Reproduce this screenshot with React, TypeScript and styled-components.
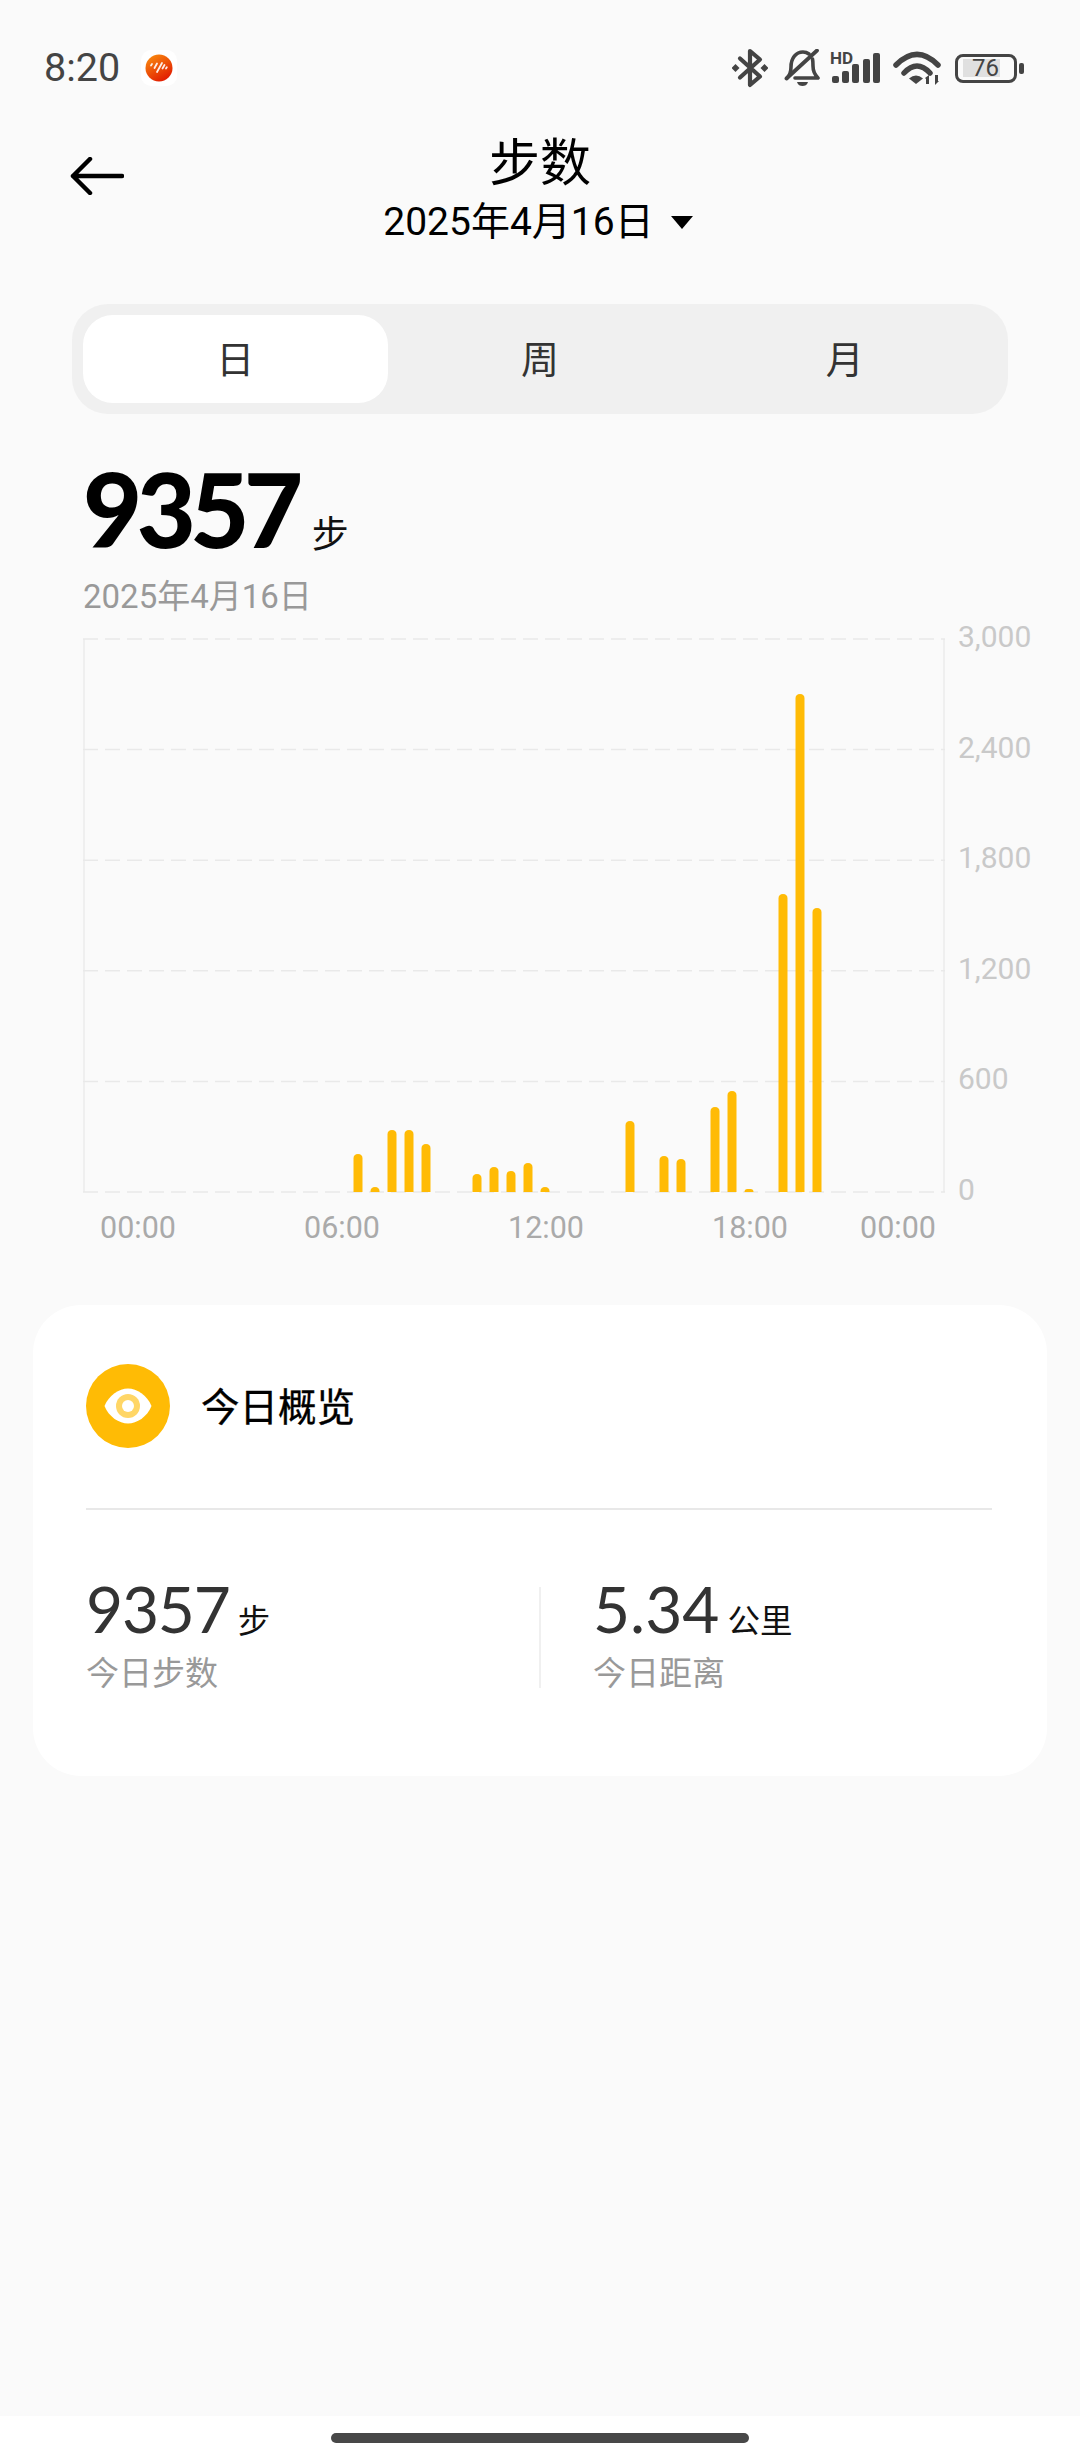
import React from "react";
import styled, { createGlobalStyle } from "styled-components";

const FONT = `Roboto, "Noto Sans CJK SC", sans-serif`;
const NUMBER_FONT = `Lato, Roboto, sans-serif`;

const GlobalStyle = createGlobalStyle`
  html, body {
    margin: 0;
    padding: 0;
    background: #fafafa;
  }
  * {
    box-sizing: border-box;
  }
`;

const Page = styled.div`
  width: 1080px;
  height: 2460px;
  overflow: hidden;
  display: flex;
  flex-direction: column;
  background: #fafafa;
  font-family: ${FONT};
`;

const StatusBar = styled.div`
  height: 130px;
  padding: 6px 56px 0 44px;
  display: flex;
  align-items: center;
  justify-content: space-between;
  flex-shrink: 0;
`;

const StatusLeft = styled.div`
  display: flex;
  align-items: center;
  gap: 21px;
`;

const Clock = styled.span`
  font-size: 39.5px;
  line-height: 44px;
  color: #444;
`;

const StatusIcons = styled.div`
  display: flex;
  align-items: center;
`;

const StatusIcon = styled.svg<{ $gap?: number }>`
  display: block;
  margin-right: ${(props) => props.$gap ?? 0}px;
  flex-shrink: 0;
`;

const SignalWrap = styled.div`
  position: relative;
  width: 50px;
  height: 32px;
  margin-right: 12px;
`;

const HdLabel = styled.span`
  position: absolute;
  left: -1px;
  top: -2px;
  font-size: 17px;
  line-height: 17px;
  font-weight: 700;
  color: #444;
`;

const Battery = styled.div`
  width: 69px;
  height: 29px;
  display: flex;
  align-items: center;
`;

const BatteryShell = styled.div`
  width: 62px;
  height: 29px;
  border: 3.5px solid #444;
  border-radius: 8px;
  display: flex;
  align-items: center;
  padding-left: 5px;
`;

const BatteryFill = styled.div`
  width: 37px;
  height: 18px;
  background: #e0e0e0;
  display: flex;
  align-items: center;
  justify-content: flex-end;
  padding-right: 1px;
  font-size: 24px;
  line-height: 18px;
  color: #444;
`;

const BatteryNub = styled.div`
  width: 5px;
  height: 11px;
  margin-left: 2px;
  border-radius: 2px;
  background: #444;
`;

const Header = styled.div`
  display: grid;
  grid-template-columns: 1fr auto 1fr;
  padding: 0 70px 56px;
  flex-shrink: 0;
`;

const BackArrow = styled.svg`
  display: block;
  margin-top: 27px;
`;

const HeaderCenter = styled.div`
  display: flex;
  flex-direction: column;
  align-items: center;
`;

const Title = styled.div`
  padding-top: 3px;
  font-size: 51px;
  line-height: 62px;
  color: #000;
`;

const DatePicker = styled.div`
  display: flex;
  align-items: center;
  gap: 17px;
  margin-top: 1px;
  margin-right: 4px;
  font-size: 39px;
  line-height: 52px;
  color: #000;
`;

const Caret = styled.div`
  width: 0;
  height: 0;
  border-left: 11px solid transparent;
  border-right: 11px solid transparent;
  border-top: 13px solid #000;
`;

const Tabs = styled.div`
  width: 936px;
  height: 110px;
  margin-left: 72px;
  padding: 11px;
  border-radius: 36px;
  background: #f0f0f0;
  display: grid;
  grid-template-columns: repeat(3, 1fr);
  flex-shrink: 0;
`;

const Tab = styled.div<{ $active?: boolean }>`
  display: flex;
  align-items: center;
  justify-content: center;
  padding-bottom: 5px;
  border-radius: 30px;
  background: ${(props) => (props.$active ? "#fff" : "transparent")};
  font-size: 38px;
  color: #333;
`;

const Summary = styled.div`
  padding-left: 83px;
  margin-top: 43px;
`;

const BigRow = styled.div`
  display: flex;
  align-items: baseline;
  gap: 14px;
`;

const BigNumber = styled.span`
  font-family: ${NUMBER_FONT};
  font-size: 102px;
  line-height: 104px;
  font-weight: 900;
  letter-spacing: -5.5px;
  color: #000;
`;

const BigUnit = styled.span`
  font-size: 37px;
  color: #111;
`;

const SummaryDate = styled.div`
  margin-top: 14px;
  font-size: 33px;
  line-height: 44px;
  color: #999;
`;

const Chart = styled.div`
  margin: 20px 0 0 83px;
  display: flex;
  gap: 13px;
`;

const Plot = styled.svg`
  display: block;
  flex-shrink: 0;
  overflow: visible;
`;

const YAxis = styled.div`
  height: 583px;
  margin-top: -17px;
  display: flex;
  flex-direction: column;
  justify-content: space-between;
`;

const YLabel = styled.div`
  font-size: 30px;
  line-height: 30px;
  color: #c9c9c9;
`;

const XAxis = styled.div`
  display: grid;
  grid-template-columns: 204px 204px 204px 148px 78px;
  margin-top: 7px;
  padding-left: 99px;
`;

const XLabel = styled.div`
  width: 78px;
  text-align: center;
  white-space: nowrap;
  font-size: 30.5px;
  line-height: 32px;
  color: #aaa;
`;

const Card = styled.div`
  width: 1014px;
  height: 471px;
  margin: 61px 0 0 33px;
  padding: 59px 55px 0 53px;
  border-radius: 48px;
  background: #fff;
  flex-shrink: 0;
`;

const CardHead = styled.div`
  display: flex;
  align-items: center;
  gap: 31px;
`;

const EyeBadge = styled.svg`
  display: block;
  flex-shrink: 0;
`;

const CardTitle = styled.div`
  padding-bottom: 4px;
  font-size: 38.5px;
  -webkit-text-stroke: 0.35px #000;
  color: #000;
`;

const Divider = styled.div`
  height: 1.5px;
  margin-top: 60px;
  background: #e8e8e8;
`;

const Stats = styled.div`
  display: flex;
  height: 108px;
  margin-top: 67px;
`;

const Stat = styled.div<{ $width?: number }>`
  width: ${(props) => (props.$width ? `${props.$width}px` : "auto")};
`;

const StatSplit = styled.div`
  width: 2px;
  height: 101px;
  margin: 10px 52px 0 0;
  background: #f0f0f0;
`;

const StatValue = styled.div`
  display: flex;
  align-items: baseline;
  gap: 8px;
`;

const StatNumber = styled.span<{ $tight?: boolean }>`
  font-family: ${NUMBER_FONT};
  font-size: 64px;
  line-height: 64px;
  letter-spacing: ${(props) => (props.$tight ? "-1.2px" : "0")};
  color: #333;
`;

const StatUnit = styled.span`
  font-size: 32.5px;
  color: #111;
`;

const StatLabel = styled.div`
  margin-top: 10px;
  font-size: 33px;
  line-height: 44px;
  color: #999;
`;

const NavArea = styled.div`
  height: 44px;
  margin-top: auto;
  background: #fff;
  display: flex;
  justify-content: center;
  padding-top: 17px;
  flex-shrink: 0;
`;

const HomeBar = styled.div`
  width: 418px;
  height: 10px;
  border-radius: 5px;
  background: #484848;
`;

const PLOT_W = 862;
const PLOT_H = 553;
const BAR_W = 9;

// x centre of slot 0 is 358 on the page, each half hour is 17px apart
const bars: [number, number][] = [
  [0, 38],
  [1, 5],
  [2, 62],
  [3, 62],
  [4, 48],
  [7, 18],
  [8, 25],
  [9, 21],
  [10, 29],
  [11, 5],
  [16, 71],
  [18, 36],
  [19, 33],
  [21, 85],
  [22, 101],
  [23, 3],
  [25, 298],
  [26, 498],
  [27, 284],
];

const barPath = (slot: number, h: number) => {
  const x = 358 - 83 + slot * 17 - BAR_W / 2;
  const r = Math.min(4.5, h);
  const top = PLOT_H - h;
  return `M${x} ${PLOT_H}V${top + r}Q${x} ${top} ${x + r} ${top}H${x + BAR_W - r}Q${x + BAR_W} ${top} ${x + BAR_W} ${top + r}V${PLOT_H}Z`;
};

const BluetoothIcon = () => (
  <StatusIcon $gap={16} width="36" height="40" viewBox="0 0 36 40">
    <path
      d="M8 10.5 28 28.5 18 37V3l10 8.5L8 29.5"
      fill="none"
      stroke="#444"
      strokeWidth="4.2"
      strokeLinecap="round"
      strokeLinejoin="round"
    />
    <path d="M3.5 16 7.5 20 3.5 24-.5 20zM32.5 16l4 4-4 4-4-4z" fill="#444" />
  </StatusIcon>
);

const BellOffIcon = () => (
  <StatusIcon $gap={11} width="36" height="38" viewBox="0 0 36 38">
    <path
      d="M3 29c3-3 4-6 4-11C7 9 12 3 19 3c2 0 4 .5 6 2M28.5 10c.5 2 .5 4 .5 7 0 5 2 9 5 12H11"
      fill="none"
      stroke="#444"
      strokeWidth="3.6"
      strokeLinecap="round"
      strokeLinejoin="round"
    />
    <path d="M2.5 29.5 33 1.5" stroke="#444" strokeWidth="3.8" strokeLinecap="round" />
    <path d="M13 33h11c-1 3-3 4-5.500 4s-4.500-1-5.500-4z" fill="#444" />
  </StatusIcon>
);

const SignalIcon = () => (
  <SignalWrap>
    <HdLabel>HD</HdLabel>
    <StatusIcon width="50" height="32" viewBox="0 0 50 32">
      {[
        [1, 24],
        [11, 19],
        [21, 12],
        [32, 7],
        [42, 1],
      ].map(([x, y]) => (
        <rect key={x} x={x} y={y} width="7" height={31 - y} rx="2" fill="#444" />
      ))}
    </StatusIcon>
  </SignalWrap>
);

const WifiIcon = () => (
  <StatusIcon $gap={14} width="48" height="34" viewBox="0 0 48 34">
    <path
      d="M3 14Q24-7 45 14M11 22Q24 8 37 22"
      fill="none"
      stroke="#444"
      strokeWidth="5.500"
      strokeLinecap="round"
    />
    <path d="M16 27.500q7-6 14 0l-7 5.500z" fill="#444" />
    <path d="M32 27l4-3v9h-3v-5zM46 30l-4 4v-10h3v6z" fill="#444" />
  </StatusIcon>
);

const AppBadge = () => (
  <svg width="36" height="36" viewBox="0 0 36 36" style={{ display: "block" }}>
    <defs>
      <linearGradient id="appGrad" x1="0.2" y1="0" x2="0.8" y2="1">
        <stop offset="0" stopColor="#f98a10" />
        <stop offset="1" stopColor="#e01400" />
      </linearGradient>
    </defs>
    <rect width="36" height="36" rx="10" fill="#fff" />
    <circle cx="18" cy="18" r="13.500" fill="url(#appGrad)" />
    <path
      d="M10 15.500l1-1.500M13.500 18l2.500-4.500M16 22l5-9M21.500 18.500l2-3.500M25 18.500l.8-1.200"
      stroke="#fff"
      strokeWidth="1.800"
      strokeLinecap="round"
      opacity="0.9"
    />
  </svg>
);

const App = () => (
  <Page>
    <GlobalStyle />
    <StatusBar>
      <StatusLeft>
        <Clock>8:20</Clock>
        <AppBadge />
      </StatusLeft>
      <StatusIcons>
        <BluetoothIcon />
        <BellOffIcon />
        <SignalIcon />
        <WifiIcon />
        <Battery>
          <BatteryShell>
            <BatteryFill>76</BatteryFill>
          </BatteryShell>
          <BatteryNub />
        </Battery>
      </StatusIcons>
    </StatusBar>

    <Header>
      <BackArrow width="54" height="38" viewBox="0 0 54 38">
        <path
          d="M52 19H3M20 2 3 19l17 17"
          fill="none"
          stroke="#000"
          strokeWidth="4.500"
          strokeLinecap="round"
          strokeLinejoin="round"
        />
      </BackArrow>
      <HeaderCenter>
        <Title>步数</Title>
        <DatePicker>
          2025年4月16日
          <Caret />
        </DatePicker>
      </HeaderCenter>
    </Header>

    <Tabs>
      <Tab $active>日</Tab>
      <Tab>周</Tab>
      <Tab>月</Tab>
    </Tabs>

    <Summary>
      <BigRow>
        <BigNumber>9357</BigNumber>
        <BigUnit>步</BigUnit>
      </BigRow>
      <SummaryDate>2025年4月16日</SummaryDate>
    </Summary>

    <Chart>
      <Plot width={PLOT_W} height={PLOT_H} viewBox={`0 0 ${PLOT_W} ${PLOT_H}`}>
        <path d={`M1 0V${PLOT_H}M${PLOT_W - 1} 0V${PLOT_H}`} stroke="#efefef" strokeWidth="2" />
        {[0, 1, 2, 3, 4, 5].map((i) => (
          <line
            key={i}
            x1="0"
            x2={PLOT_W}
            y1={i * (PLOT_H / 5)}
            y2={i * (PLOT_H / 5)}
            stroke="#e9e9e9"
            strokeWidth="1.500"
            strokeDasharray="15 7"
          />
        ))}
        {bars.map(([slot, h]) => (
          <path key={slot} d={barPath(slot, h)} fill="#ffbb05" />
        ))}
      </Plot>
      <YAxis>
        {["3,000", "2,400", "1,800", "1,200", "600", "0"].map((label) => (
          <YLabel key={label}>{label}</YLabel>
        ))}
      </YAxis>
    </Chart>
    <XAxis>
      {["00:00", "06:00", "12:00", "18:00", "00:00"].map((label, i) => (
        <XLabel key={i}>{label}</XLabel>
      ))}
    </XAxis>

    <Card>
      <CardHead>
        <EyeBadge width="84" height="84" viewBox="0 0 84 84">
          <circle cx="42" cy="42" r="42" fill="#ffbb05" />
          <path d="M18.500 42C23 31 33 24.500 42 24.500S61 31 65.500 42C61 53 51 59.500 42 59.500S23 53 18.500 42z" fill="#fff" />
          <circle cx="42" cy="42" r="12" fill="#ffd666" />
          <circle cx="42" cy="42" r="6" fill="#fff" />
        </EyeBadge>
        <CardTitle>今日概览</CardTitle>
      </CardHead>
      <Divider />
      <Stats>
        <Stat $width={453}>
          <StatValue>
            <StatNumber $tight>9357</StatNumber>
            <StatUnit>步</StatUnit>
          </StatValue>
          <StatLabel>今日步数</StatLabel>
        </Stat>
        <StatSplit />
        <Stat>
          <StatValue>
            <StatNumber>5.34</StatNumber>
            <StatUnit>公里</StatUnit>
          </StatValue>
          <StatLabel>今日距离</StatLabel>
        </Stat>
      </Stats>
    </Card>

    <NavArea>
      <HomeBar />
    </NavArea>
  </Page>
);

export default App;
